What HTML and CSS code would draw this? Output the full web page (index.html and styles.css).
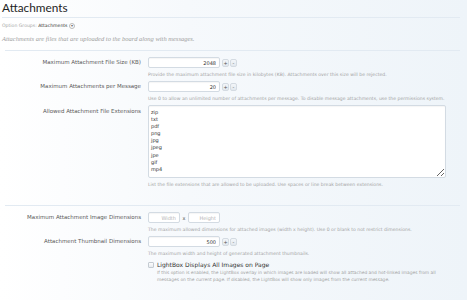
FILE: index.html
```html
<!DOCTYPE html>
<html lang="en">

<head>
  <title>Attachments - Options</title>
  <meta charset="UTF-8">
  <meta name="viewport" content="width=device-width, initial-scale=1.0">
  <link rel="stylesheet" href="styles.css">
</head>

<body>
  <div class="titleBar">
    <h1>Attachments</h1>
  </div>

  <div class="groupChooser">
    Option Groups: <strong>Attachments</strong>
    <span class="chooserIcon">&#9662;</span>
  </div>

  <p class="groupDescription">Attachments are files that are uploaded to the board along with messages.</p>

  <form class="xenForm">
    <fieldset>
      <dl class="ctrlUnit">
        <dt><label for="attachmentMaxFileSize">Maximum Attachment File Size (KB)</label></dt>
        <dd>
          <div class="spinBox">
            <input type="text" id="attachmentMaxFileSize" class="textCtrl number" value="2048">
            <button type="button" class="spinButton">+</button>
            <button type="button" class="spinButton">-</button>
          </div>
          <p class="explain">Provide the maximum attachment file size in kilobytes (KB). Attachments over this size will be rejected.</p>
        </dd>
      </dl>

      <dl class="ctrlUnit">
        <dt><label for="attachmentMaxPerMessage">Maximum Attachments per Message</label></dt>
        <dd>
          <div class="spinBox">
            <input type="text" id="attachmentMaxPerMessage" class="textCtrl number" value="20">
            <button type="button" class="spinButton">+</button>
            <button type="button" class="spinButton">-</button>
          </div>
          <p class="explain">Use 0 to allow an unlimited number of attachments per message. To disable message attachments, use the permissions system.</p>
        </dd>
      </dl>

      <dl class="ctrlUnit">
        <dt><label for="attachmentExtensions" class="textareaLabel">Allowed Attachment File Extensions</label></dt>
        <dd>
          <textarea id="attachmentExtensions" class="textCtrl extensions">zip
txt
pdf
png
jpg
jpeg
jpe
gif
mp4</textarea>
          <p class="explain">List the file extensions that are allowed to be uploaded. Use spaces or line break between extensions.</p>
        </dd>
      </dl>
    </fieldset>

    <fieldset>
      <dl class="ctrlUnit">
        <dt><label for="attachmentMaxWidth">Maximum Attachment Image Dimensions</label></dt>
        <dd>
          <div class="dimensions">
            <input type="text" id="attachmentMaxWidth" class="textCtrl dimension" placeholder="Width">
            <span class="times">x</span>
            <input type="text" class="textCtrl dimension" placeholder="Height">
          </div>
          <p class="explain">The maximum allowed dimensions for attached images (width x height). Use 0 or blank to not restrict dimensions.</p>
        </dd>
      </dl>

      <dl class="ctrlUnit">
        <dt><label for="attachmentThumbnail">Attachment Thumbnail Dimensions</label></dt>
        <dd>
          <div class="spinBox">
            <input type="text" id="attachmentThumbnail" class="textCtrl number" value="500">
            <button type="button" class="spinButton">+</button>
            <button type="button" class="spinButton">-</button>
          </div>
          <p class="explain">The maximum width and height of generated attachment thumbnails.</p>
        </dd>
      </dl>

      <dl class="ctrlUnit">
        <dt></dt>
        <dd>
          <label class="checkLabel"><input type="checkbox" class="check"> LightBox Displays All Images on Page</label>
          <p class="explain indented">If this option is enabled, the LightBox overlay in which images are loaded will show all attached and hot-linked images from all messages on the current page. If disabled, the LightBox will show only images from the current message.</p>
        </dd>
      </dl>
    </fieldset>
  </form>
</body>

</html>
```

FILE: styles.css
```css
:root {
  --line-color: #e2eaf2;
  --label-color: #595959;
  --explain-color: #a3a3a3;
  --input-border: #d3dbe3;
  --label-width: 136px;
}

* {
  box-sizing: border-box;
  margin: 0;
  padding: 0;
}

body {
  font-family: 'DejaVu Sans', Verdana, sans-serif;
  color: var(--label-color);
  background: linear-gradient(to right, #ffffff 0%, #f6f9fc 40%, #eef4f9 100%);
  min-height: 300px;
  padding: 0 7px 0 2px;
}

/* title */
.titleBar {
  border-bottom: 1px solid var(--line-color);
  height: 18px;
}

h1 {
  font-family: Lato, 'Liberation Sans', sans-serif;
  font-weight: normal;
  font-size: 11.8px;
  line-height: 16px;
  color: #1e1e1e;
}

.groupChooser {
  font-size: 4.6px;
  line-height: 8px;
  margin-top: 4px;
  color: #a6a6a6;
}

.groupChooser strong {
  color: #333;
  font-weight: normal;
}

.chooserIcon {
  display: inline-block;
  width: 6px;
  height: 6px;
  border: 1px solid #bbb;
  border-radius: 50%;
  font-size: 4px;
  line-height: 4px;
  text-align: center;
  color: #666;
  vertical-align: middle;
}

.groupDescription {
  font-family: 'Liberation Serif', serif;
  font-style: italic;
  font-size: 6.5px;
  line-height: 9px;
  margin-top: 4px;
  color: #a0a0a0;
}

/* form */
.xenForm {
  margin-top: 7px;
  padding-left: 3px;
}

fieldset {
  border: none;
  border-top: 1px solid var(--line-color);
  padding: 6px 0 14px 0;
}

fieldset:last-child {
  border-bottom: 1px solid var(--line-color);
  padding-bottom: 17px;
}

.ctrlUnit {
  display: grid;
  grid-template-columns: var(--label-width) 1fr;
  column-gap: 7px;
  margin-bottom: 3px;
}

.ctrlUnit dt {
  text-align: right;
  font-size: 5.5px;
  line-height: 11px;
  color: var(--label-color);
}

.ctrlUnit dt .textareaLabel {
  display: block;
  line-height: 7px;
  margin-top: 3px;
}

.ctrlUnit dd {
  min-width: 0;
}

.textCtrl {
  font-family: 'DejaVu Sans', Verdana, sans-serif;
  font-size: 5px;
  color: #333;
  background: #fff;
  border: 1px solid var(--input-border);
  border-radius: 2px;
  box-shadow: inset 0 1px 1px rgba(0, 0, 0, 0.04);
  outline: none;
}

.spinBox {
  display: flex;
  align-items: center;
  gap: 1px;
  height: 11px;
}

.textCtrl.number {
  width: 72px;
  height: 11px;
  padding: 0 3px;
  text-align: right;
  margin-right: 1px;
}

.spinButton {
  width: 7px;
  height: 8px;
  font-family: 'DejaVu Sans', sans-serif;
  font-size: 5px;
  line-height: 6px;
  color: #555;
  background: linear-gradient(to bottom, #f3f6f9, #e2e8ee);
  border: 1px solid #d4dbe2;
  border-radius: 2px;
}

.textCtrl.extensions {
  display: block;
  width: 298px;
  height: 73px;
  padding: 3px 2px;
  font-size: 5px;
  line-height: 7.1px;
  resize: vertical;
}

.dimensions {
  display: flex;
  align-items: center;
  height: 11px;
}

.textCtrl.dimension {
  width: 32px;
  height: 11px;
  padding: 0 3px;
  text-align: right;
}

.textCtrl.dimension::placeholder {
  color: #b5b5b5;
}

.times {
  font-size: 5px;
  width: 8px;
  text-align: center;
  color: #555;
}

.explain {
  font-size: 4.6px;
  line-height: 7px;
  margin-top: 3px;
  color: var(--explain-color);
}

.checkLabel {
  display: flex;
  align-items: center;
  gap: 3px;
  font-size: 6px;
  line-height: 9px;
  color: #333;
}

.check {
  appearance: none;
  width: 6px;
  height: 6px;
  border: 1px solid #c4cbd2;
  border-radius: 1px;
  background: linear-gradient(to bottom, #fdfdfd, #e8ecf0);
}

.explain.indented {
  margin-top: 0;
  padding-left: 9px;
  max-width: 305px;
  font-size: 4.4px;
}
```
